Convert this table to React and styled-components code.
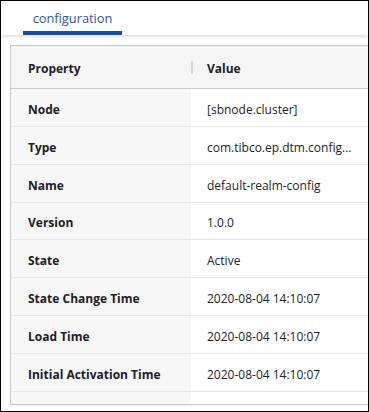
import React from "react";
import styled, { createGlobalStyle } from "styled-components";

const Global = createGlobalStyle`
  html, body { margin: 0; padding: 0; background: #fff; }
  body { font-family: "Open Sans", "Noto Sans", sans-serif; }
`;

const Frame = styled.div`
  width: 369px;
  height: 412px;
  box-sizing: border-box;
  border: 1px solid #000;
  background: #fff;
  overflow: hidden;
  display: flex;
  flex-direction: column;
`;

const TabBar = styled.div`
  height: 34px;
  flex: none;
  display: flex;
  padding-left: 22px;
  box-shadow: 0 2px 3px rgba(0, 0, 0, 0.12);
  position: relative;
  z-index: 1;
`;

const Tab = styled.div`
  box-sizing: border-box;
  width: 99px;
  height: 34px;
  display: flex;
  justify-content: center;
  padding-top: 8px;
  font-size: 12.8px;
  color: #2b57a3;
  border-bottom: 4px solid ${(p) => (p.$active ? "#1a4f9b" : "transparent")};
`;

const Content = styled.div`
  flex: 1;
  padding: 10px 0 7px 9px;
  display: flex;
  min-height: 0;
`;

const Panel = styled.div`
  flex: none;
  width: 420px;
  height: 360px;
  box-sizing: border-box;
  border: 1px solid #c6c7d1;
  background: #f7f7f8;
  overflow: hidden;
  box-shadow: 0 1px 2px rgba(0, 0, 0, 0.06);
`;

const HeaderRow = styled.div`
  display: grid;
  grid-template-columns: 180px 1fr;
  height: 43px;
  box-sizing: border-box;
  border-bottom: 1px solid #c9cad3;
  background: #f5f5f6;
`;

const HeadCell = styled.div`
  display: flex;
  align-items: center;
  padding-top: 3px;
  padding-left: ${(p) => (p.$value ? "16px" : "17px")};
  font-size: 12px;
  font-weight: 700;
  color: #1e2024;
  position: relative;
  ${(p) =>
    p.$value &&
    `&::before {
      content: "";
      position: absolute;
      left: 0;
      top: 15px;
      width: 2px;
      height: 13px;
      background: #d4d5da;
    }`}
`;

const Row = styled.div`
  display: grid;
  grid-template-columns: 180px 1fr;
  height: 37.85px;
  box-sizing: border-box;
  border-bottom: 1px solid #e6e7ee;
`;

const KeyCell = styled.div`
  display: flex;
  align-items: center;
  padding-top: 4px;
  padding-left: 17px;
  font-size: 12px;
  font-weight: 700;
  color: #1e2024;
  background: #f7f7f8;
  white-space: nowrap;
`;

const ValCell = styled.div`
  display: flex;
  align-items: center;
  padding-top: 4px;
  padding-left: 16px;
  font-size: 12px;
  color: #222428;
  background: #fff;
  white-space: nowrap;
  overflow: hidden;
`;

const rows = [
  ["Node", "[sbnode.cluster]"],
  ["Type", "com.tibco.ep.dtm.config..."],
  ["Name", "default-realm-config"],
  ["Version", "1.0.0"],
  ["State", "Active"],
  ["State Change Time", "2020-08-04 14:10:07"],
  ["Load Time", "2020-08-04 14:10:07"],
  ["Initial Activation Time", "2020-08-04 14:10:07"],
  ["", ""],
];

export default function App() {
  return (
    <>
      <Global />
      <Frame>
        <TabBar>
          <Tab $active>configuration</Tab>
        </TabBar>
        <Content>
          <Panel>
            <HeaderRow>
              <HeadCell>Property</HeadCell>
              <HeadCell $value>Value</HeadCell>
            </HeaderRow>
            {rows.map(([k, v], i) => (
              <Row key={i}>
                <KeyCell>{k}</KeyCell>
                <ValCell>{v}</ValCell>
              </Row>
            ))}
          </Panel>
        </Content>
      </Frame>
    </>
  );
}
